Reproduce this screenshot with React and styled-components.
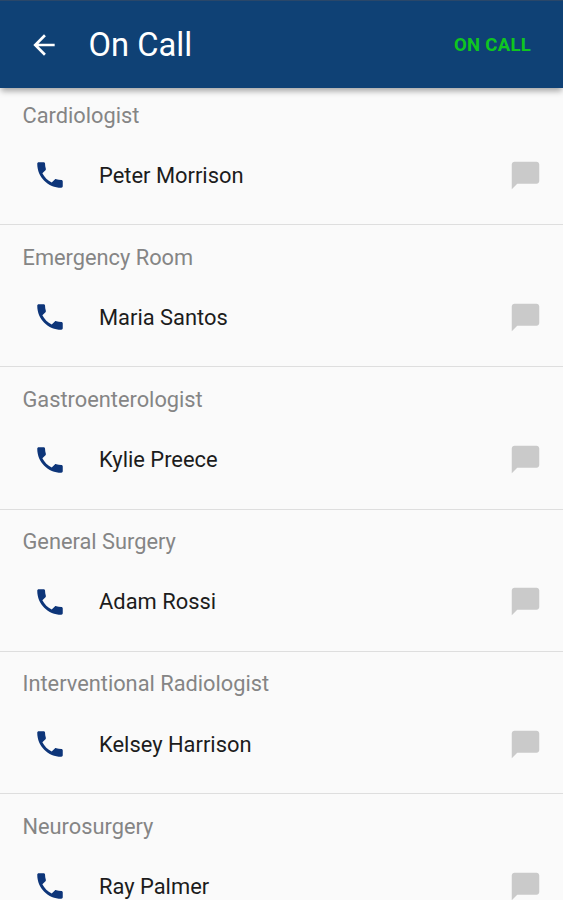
import styled, { createGlobalStyle } from "styled-components"
import { MdArrowBack, MdPhone, MdChatBubble } from "react-icons/md"

const specialties = [
    { title: "Cardiologist", name: "Peter Morrison" },
    { title: "Emergency Room", name: "Maria Santos" },
    { title: "Gastroenterologist", name: "Kylie Preece" },
    { title: "General Surgery", name: "Adam Rossi" },
    { title: "Interventional Radiologist", name: "Kelsey Harrison" },
    { title: "Neurosurgery", name: "Ray Palmer" },
]

const App = () => {
    return (
        <>
            <GlobalStyle />
            <Screen>
                <AppBar>
                    <BackButton aria-label="Back"><MdArrowBack size={32} /></BackButton>
                    <Title>On Call</Title>
                    <Status>ON CALL</Status>
                </AppBar>
                <List>
                    {specialties.map(({ title, name }) => (
                        <Section key={title}>
                            <SectionTitle>{title}</SectionTitle>
                            <Row>
                                <IconButton color="#0d3579" aria-label={`Call ${name}`}><MdPhone size={34} /></IconButton>
                                <Name>{name}</Name>
                                <IconButton color="#cacaca" aria-label={`Message ${name}`}><MdChatBubble size={33} /></IconButton>
                            </Row>
                        </Section>
                    ))}
                </List>
            </Screen>
        </>
    )
}
export default App

const GlobalStyle = createGlobalStyle`
    * {
        box-sizing: border-box;
    }
    body {
        margin: 0;
        background: #fafafa;
        font-family: Roboto, sans-serif;
    }
    button {
        display: flex;
        padding: 0;
        border: 0;
        background: transparent;
        font-family: inherit;
    }
    `

const Screen = styled.div`
    display: flex;
    flex-direction: column;
    height: 900px;
    overflow: hidden;
    `

const AppBar = styled.header`
    display: flex;
    align-items: center;
    flex-shrink: 0;
    height: 88px;
    padding: 0 32px 0 28px;
    border-top: 1px solid #2a4769;
    background: #0f4175;
    box-shadow: 0 4px 6px -1px rgba(0, 0, 0, 0.35);
    z-index: 1;
    `

const BackButton = styled.button`
    color: #fff;
    `

const Title = styled.h1`
    flex: 1;
    margin: 0 0 0 28.5px;
    color: #fff;
    font-size: 32.7px;
    font-weight: 400;
    line-height: 40px;
    `

const Status = styled.button`
    color: #0fc61f;
    font-size: 18.5px;
    font-weight: 700;
    letter-spacing: 0.3px;
    `

const List = styled.main`
    flex: 1;
    overflow: hidden;
    /* first section tucks up under the app bar */
    margin-top: -5px;
    `

const Section = styled.section`
    height: 142.2px;
    padding: 18.7px 21px 0 22.5px;
    border-bottom: 1px solid #dedede;
    `

const SectionTitle = styled.h2`
    margin: 0;
    color: #858585;
    font-size: 21.8px;
    font-weight: 400;
    line-height: 28px;
    `

const Row = styled.div`
    display: flex;
    align-items: center;
    height: 64px;
    margin-top: 13.6px;
    padding-left: 10.5px;
    `

const IconButton = styled.button`
    color: ${({ color }) => color};
    `

const Name = styled.span`
    flex: 1;
    margin-left: 32px;
    color: #1c1c1c;
    font-size: 21.9px;
    `
